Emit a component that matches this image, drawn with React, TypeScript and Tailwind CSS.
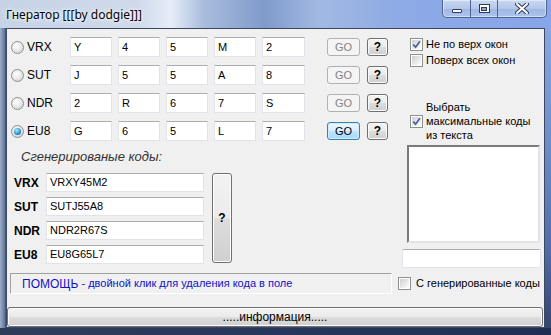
import React from "react";

const F = "font-['Liberation_Sans',Arial,sans-serif]";

function Radio({ checked }: { checked?: boolean }) {
  return (
    <span className="flex h-[13px] w-[13px] shrink-0 items-center justify-center rounded-full border border-[#8e8f8f] bg-[radial-gradient(circle_at_40%_35%,#ffffff_0%,#e6e6e6_55%,#c9c9c9_100%)]">
      {checked && (
        <span className="h-[7px] w-[7px] rounded-full bg-[radial-gradient(circle_at_40%_35%,#b5ecff_0%,#2a93d6_55%,#0d4f8c_100%)]" />
      )}
    </span>
  );
}

function Check({ checked }: { checked?: boolean }) {
  return (
    <span className="flex h-[13px] w-[13px] shrink-0 items-center justify-center border border-[#8e8f8f] bg-white p-[1px]">
      <span className="flex h-full w-full items-center justify-center bg-[linear-gradient(135deg,#cfcfcf_0%,#f0f0f0_70%,#ffffff_100%)]">
        {checked && (
          <svg width="9" height="9" viewBox="0 0 9 9">
            <path d="M1.2 4.6 L3.6 7.2 L7.9 1.3" stroke="#4b5f9e" strokeWidth="1.7" fill="none" />
          </svg>
        )}
      </span>
    </span>
  );
}

function Box({ v, w = "w-[42px]" }: { v: string; w?: string }) {
  return (
    <div className={`${w} flex h-[20px] shrink-0 items-center border border-[#e2e3ea] border-t-[#abadb3] bg-white pl-[3px] text-[11px] text-black`}>
      {v}
    </div>
  );
}

function GoBtn({ active }: { active?: boolean }) {
  if (active)
    return (
      <div className="ml-[22px] flex h-[18px] w-[33px] items-center justify-center rounded-[3px] border border-[#3c7fb1] bg-[linear-gradient(180deg,#eaf6fd_0%,#d9f0fc_50%,#bee6fd_51%,#a7d9f5_100%)] text-[11px] text-black shadow-[inset_0_0_0_1px_#cdeeff]">
        GO
      </div>
    );
  return (
    <div className="ml-[22px] flex h-[18px] w-[33px] items-center justify-center rounded-[3px] border border-[#adb2b5] bg-[#f4f4f4] text-[11px] text-[#838383]">
      GO
    </div>
  );
}

function QBtn({ cls }: { cls: string }) {
  return (
    <div className={`${cls} flex items-center justify-center rounded-[3px] border border-[#707070] bg-[linear-gradient(180deg,#f2f2f2_0%,#ebebeb_50%,#dddddd_51%,#cfcfcf_100%)] text-[12px] font-bold text-black shadow-[inset_0_0_0_1px_#fcfcfc]`}>
      ?
    </div>
  );
}

const rows = [
  { n: "VRX", v: ["Y", "4", "5", "M", "2"] },
  { n: "SUT", v: ["J", "5", "5", "A", "8"] },
  { n: "NDR", v: ["2", "R", "6", "7", "S"] },
  { n: "EU8", v: ["G", "6", "5", "L", "7"], sel: true },
];

const gen = [
  { n: "VRX", v: "VRXY45M2" },
  { n: "SUT", v: "SUTJ55A8" },
  { n: "NDR", v: "NDR2R67S" },
  { n: "EU8", v: "EU8G65L7" },
];

export default function App() {
  return (
    <div className={`${F} relative h-[335px] w-[551px] overflow-hidden bg-[linear-gradient(180deg,#b9c9e2_0%,#8ea6cf_30%,#60779f_70%,#2c3c5e_100%)]`}>
      {/* title bar */}
      <div className="flex h-[28px] items-start justify-between bg-[linear-gradient(90deg,#c6d3e6_0%,#cfd9ea_25%,#e6edf7_31%,#a9bcdc_37%,#7f9acb_48%,#a2b9e2_58%,#8eaae6_72%,#86a5ea_100%)]">
        <div className="pl-[6px] pt-[6px] text-[12px] text-black [font-family:'Noto_Sans','Open_Sans',sans-serif] [text-shadow:0_0_6px_#ffffff,0_0_3px_#ffffff]">
          Гнератор [[[by dodgie]]]
        </div>
        <div className="mr-[4px] flex h-[18px] overflow-hidden rounded-b-[5px] border border-t-0 border-[#4f6491] bg-[linear-gradient(180deg,#c9d8f0_0%,#b3c7ea_50%,#9fb6e2_51%,#aec4ec_100%)] shadow-[inset_0_0_0_1px_rgba(255,255,255,0.45)]">
          <div className="flex w-[28px] items-center justify-center border-r border-[#4f6491]">
            <div className="mt-[4px] h-[4px] w-[10px] rounded-[1px] border border-[#2d3b58] bg-white" />
          </div>
          <div className="flex w-[27px] items-center justify-center border-r border-[#4f6491]">
            <div className="flex h-[9px] w-[11px] items-center justify-center border border-[#2d3b58] bg-white">
              <div className="h-[4px] w-[6px] border border-[#2d3b58] bg-[#8ca5d6]" />
            </div>
          </div>
          <div className="flex w-[48px] items-center justify-center">
            <svg width="14" height="11" viewBox="0 0 14 11">
              <path d="M2 1 L12 10 M12 1 L2 10" stroke="#2d3b58" strokeWidth="4" strokeLinecap="round" />
              <path d="M2 1 L12 10 M12 1 L2 10" stroke="#ffffff" strokeWidth="2" strokeLinecap="round" />
            </svg>
          </div>
        </div>
      </div>

      <div className="flex h-[300px]">
        <div className="w-[6px] bg-[linear-gradient(90deg,#9aadcc_0%,#6b7e9f_70%,#3d4c66_100%)]" />
        {/* content */}
        <div className="flex h-[300px] w-[539px] flex-col border border-[#3b4862] bg-[#f0f0f0]">
          <div className="flex">
            {/* left column */}
            <div className="w-[395px] pl-[4px] pt-[8px]">
              <div className="flex flex-col gap-[8px]">
                {rows.map((r) => (
                  <div key={r.n} className="flex h-[20px] items-center">
                    <Radio checked={r.sel} />
                    <div className="ml-[3px] w-[43px] text-[12px] text-black">{r.n}</div>
                    <div className="flex gap-[6px]">
                      {r.v.map((c, i) => (
                        <Box key={i} v={c} w={i === 4 ? "w-[43px]" : "w-[42px]"} />
                      ))}
                    </div>
                    <GoBtn active={r.sel} />
                    <QBtn cls="ml-[7px] h-[18px] w-[21px]" />
                  </div>
                ))}
              </div>
              <div className="ml-[10px] mt-[8px] h-[16px] text-[13px] italic leading-[16px] text-[#333333]">
                Сгенерированые коды:
              </div>
              <div className="ml-[3px] mt-[8px] flex items-start">
                <div className="flex flex-col gap-[5px]">
                  {gen.map((g) => (
                    <div key={g.n} className="flex h-[19px] items-center">
                      <div className="w-[32px] text-[12px] font-bold text-black">{g.n}</div>
                      <div className="flex h-[19px] w-[158px] items-center border border-[#e2e3ea] border-t-[#abadb3] bg-white pl-[3px] text-[11px] text-black">
                        {g.v}
                      </div>
                    </div>
                  ))}
                </div>
                <QBtn cls="ml-[8px] h-[90px] w-[20px]" />
              </div>
            </div>
            {/* right column */}
            <div className="flex w-[142px] flex-col pt-[9px]">
              <div className="ml-[8px] flex h-[13px] items-center">
                <Check checked />
                <span className="ml-[3px] text-[11px] text-black">Не по верх окон</span>
              </div>
              <div className="ml-[8px] mt-[3px] flex h-[13px] items-center">
                <Check />
                <span className="ml-[3px] text-[11px] text-black">Поверх всех окон</span>
              </div>
              <div className="ml-[8px] mt-[33px] flex h-[42px] items-center">
                <Check checked />
                <span className="ml-[3px] text-[11px] leading-[14px] text-black">
                  Выбрать
                  <br />
                  максимальные коды
                  <br />
                  из текста
                </span>
              </div>
              <div className="ml-[5px] mt-[3px] h-[98px] w-[133px] border-2 border-[#7a7a7a] border-b-[#e3e3e3] border-r-[#e3e3e3] bg-white" />
              <div className="mt-[6px] h-[19px] w-[139px] rounded-[2px] border border-[#e2e3ea] border-t-[#abadb3] bg-white" />
            </div>
          </div>
          {/* help row */}
          <div className="mt-[5px] flex h-[21px] items-center">
            <div className="ml-[3px] flex h-[21px] w-[382px] items-center border border-[#a0a0a0] border-b-[#ffffff] border-r-[#ffffff] pl-[11px] text-[11px] text-[#1010c8]">
              <span className="text-[12px]">ПОМОЩЬ</span>
              <span>&nbsp;- двойной клик для удаления кода в поле</span>
            </div>
            <div className="ml-[6px]">
              <Check />
            </div>
            <span className="ml-[5px] text-[11px] text-black">С генерированные коды</span>
          </div>
          {/* info button */}
          <div className="mt-[13px] flex h-[20px] w-[536px] items-center justify-center rounded-[3px] border border-[#707070] bg-[linear-gradient(180deg,#f2f2f2_0%,#ebebeb_50%,#dddddd_51%,#cfcfcf_100%)] text-[12px] text-black shadow-[inset_0_0_0_1px_#fcfcfc]">
            .....информация.....
          </div>
        </div>
        <div className="w-[6px] bg-[linear-gradient(180deg,#86a6e6_0%,#6d8ccc_40%,#4f6aa8_75%,#34466e_100%)]" />
      </div>
      <div className="h-[7px] bg-[linear-gradient(90deg,#2f3d5a_0%,#26365c_50%,#1f2e52_100%)]" />
    </div>
  );
}
